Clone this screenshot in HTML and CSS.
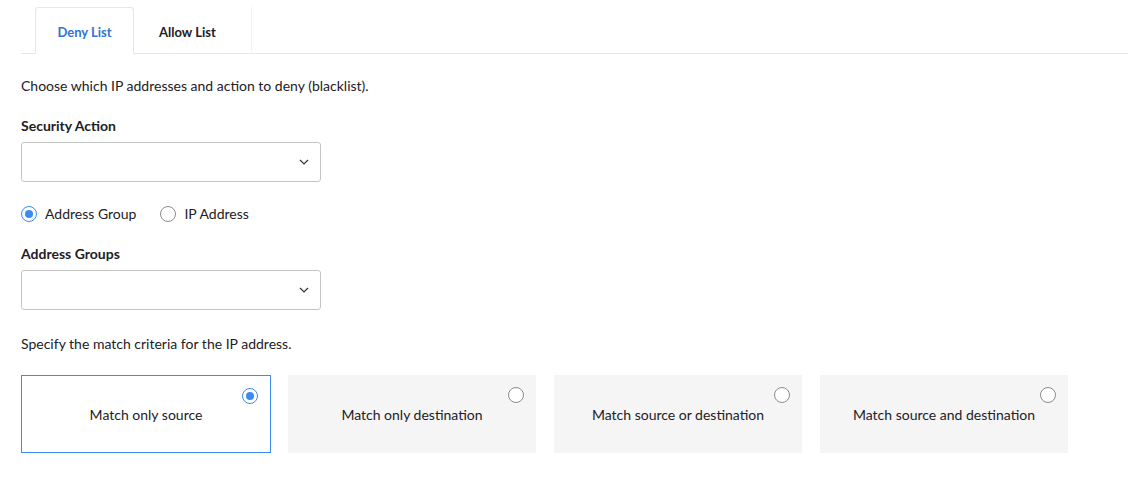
FILE: index.html
```html
<!DOCTYPE html>
<html>
<head>
<meta charset="utf-8">
<link rel="stylesheet" href="styles.css">
</head>
<body>
<div class="page">
  <div class="tabs">
    <div class="tab active">Deny List</div>
    <div class="tab">Allow List</div>
  </div>
  <p class="intro">Choose which IP addresses and action to deny (blacklist).</p>
  <div class="label">Security Action</div>
  <div class="select"><svg class="chev" width="10" height="6" viewBox="0 0 10 6"><path d="M1 1l4 4 4-4" fill="none" stroke="#333" stroke-width="1.2"/></svg></div>
  <div class="radios">
    <label class="radio"><span class="dot on"></span>Address Group</label>
    <label class="radio"><span class="dot"></span>IP Address</label>
  </div>
  <div class="label">Address Groups</div>
  <div class="select"><svg class="chev" width="10" height="6" viewBox="0 0 10 6"><path d="M1 1l4 4 4-4" fill="none" stroke="#333" stroke-width="1.2"/></svg></div>
  <p class="intro2">Specify the match criteria for the IP address.</p>
  <div class="cards">
    <div class="card selected"><span class="dot on corner"></span>Match only source</div>
    <div class="card"><span class="dot corner"></span>Match only destination</div>
    <div class="card"><span class="dot corner"></span>Match source or destination</div>
    <div class="card"><span class="dot corner"></span>Match source and destination</div>
  </div>
</div>
</body>
</html>
```
FILE: styles.css
```css
* { box-sizing: border-box; }
body { margin: 0; font-family: Lato, "Liberation Sans", sans-serif; color: #1d2026; font-size: 14px; background: #fff; }
.page { padding: 7px 0 0 21px; }
.tabs { display: flex; padding-left: 14px; border-bottom: 1px solid #e6e6e6; height: 47px; }
.tab { height: 47px; display: flex; align-items: center; padding-top: 2px; font-weight: 700; font-size: 13px; color: #1d2026; }
.tab.active { width: 99px; justify-content: center; color: #2f74d6; border: 1px solid #e6e6e6; border-bottom: 1px solid #fff; border-radius: 3px 3px 0 0; background: #fff; margin-bottom: -1px; height: 47px; }
.tab:not(.active) { width: 118px; padding-left: 25px; border-right: 1px solid #f2f2f2; }
.intro { margin: 24px 0 0; line-height: 16px; }
.label { font-weight: 700; margin-top: 24px; line-height: 16px; }
.select { width: 300px; height: 40px; border: 1px solid #c4c4c4; border-radius: 3px; margin-top: 8px; display: flex; align-items: center; justify-content: flex-end; padding-right: 11px; }
.radios { display: flex; gap: 24px; margin-top: 24px; line-height: 16px; }
.radio { display: flex; align-items: center; gap: 8px; }
.dot { width: 16px; height: 16px; border-radius: 50%; border: 1px solid #8c8c8c; background: #fff; display: inline-block; position: relative; flex: none; }
.dot.on { border: 1.5px solid #3b8cf0; }
.dot.on::after { content: ""; position: absolute; left: 50%; top: 50%; width: 8px; height: 8px; margin: -4px 0 0 -4px; border-radius: 50%; background: #3b8cf0; }
.intro2 { margin: 26px 0 0; line-height: 16px; }
.cards { display: flex; gap: 17px; margin-top: 23px; }
.card { position: relative; width: 248px; height: 78px; background: #f5f5f5; display: flex; align-items: center; justify-content: center; }
.card.selected { width: 250px; background: #fff; border: 1px solid #3b8cf0; }
.card .corner { position: absolute; top: 12px; right: 12px; }
.card + .card + .card { margin-left: 1px; }
```
